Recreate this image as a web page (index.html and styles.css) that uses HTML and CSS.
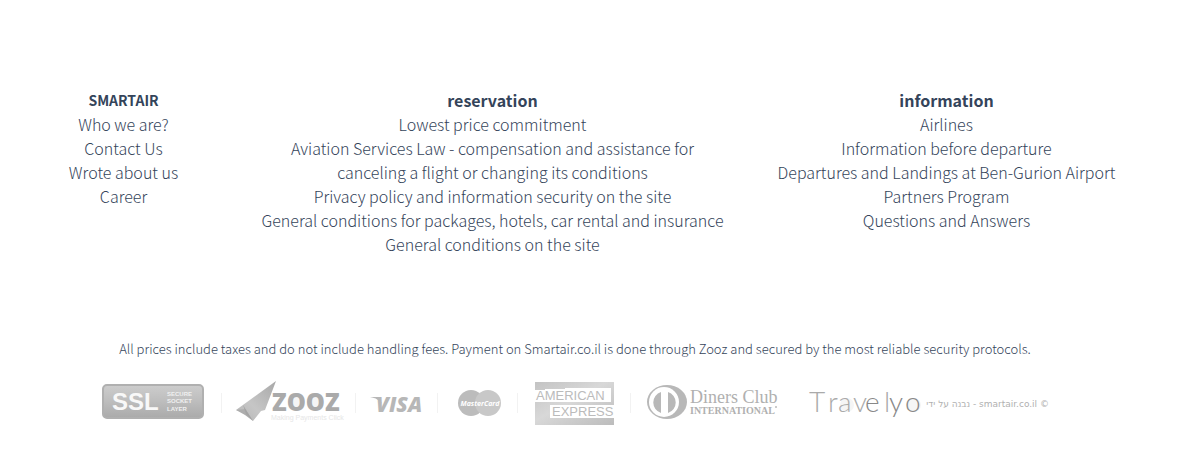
FILE: index.html
```html
<!DOCTYPE html>
<html lang="en">
<head>
<meta charset="utf-8">
<meta name="viewport" content="width=device-width, initial-scale=1">
<title>Smartair</title>
<link rel="stylesheet" href="styles.css">
</head>
<body>
<footer class="footer">
  <nav class="columns" aria-label="Footer">
    <section class="column">
      <h2 class="title title-small">SMARTAIR</h2>
      <ul class="links">
        <li><a href="#">Who we are?</a></li>
        <li><a href="#">Contact Us</a></li>
        <li><a href="#">Wrote about us</a></li>
        <li><a href="#">Career</a></li>
      </ul>
    </section>
    <section class="column">
      <h2 class="title">reservation</h2>
      <ul class="links">
        <li><a href="#">Lowest price commitment</a></li>
        <li><a href="#">Aviation Services Law - compensation and assistance for canceling a flight or changing its conditions</a></li>
        <li><a href="#">Privacy policy and information security on the site</a></li>
        <li><a href="#">General conditions for packages, hotels, car rental and insurance</a></li>
        <li><a href="#">General conditions on the site</a></li>
      </ul>
    </section>
    <section class="column">
      <h2 class="title">information</h2>
      <ul class="links">
        <li><a href="#">Airlines</a></li>
        <li><a href="#">Information before departure</a></li>
        <li><a href="#">Departures and Landings at Ben-Gurion Airport</a></li>
        <li><a href="#">Partners Program</a></li>
        <li><a href="#">Questions and Answers</a></li>
      </ul>
    </section>
  </nav>
  <p class="note">All prices include taxes and do not include handling fees. Payment on Smartair.co.il is done through Zooz and secured by the most reliable security protocols.</p>
  <ul class="logos">
    <li class="logo">
      <svg width="137" height="60" viewBox="0 0 137 60">
        <defs><linearGradient id="ssl" x2="0" y2="1"><stop offset="0" stop-color="#cdcdcd"/><stop offset=".5" stop-color="#bdbdbd"/><stop offset="1" stop-color="#aaa"/></linearGradient></defs>
        <rect x="19" y="15" width="100" height="33" rx="4" fill="url(#ssl)" stroke="#b0b0b0" stroke-width="2"/>
        <text class="ssl-big" x="28" y="40">SSL</text>
        <text class="ssl-small" x="83" y="26">SECURE</text>
        <text class="ssl-small" x="83" y="33">SOCKET</text>
        <text class="ssl-small" x="83" y="41">LAYER</text>
      </svg>
    </li>
    <li class="logo">
      <svg width="133" height="60" viewBox="0 0 133 60">
        <defs><linearGradient id="plane" x1="1" x2="0" y2="1"><stop offset="0" stop-color="#a8a8a8"/><stop offset=".6" stop-color="#c6c6c6"/><stop offset="1" stop-color="#b4b4b4"/></linearGradient></defs>
        <path d="M54 11 14 40l9 3 8 8 8-10 4-1z" fill="url(#plane)"/>
        <path d="M14 40l9-1 8 12-8-6z" fill="#adadad"/>
        <path d="M21 35l3 9 7 7z" fill="#a3a3a3"/>
        <circle cx="75" cy="32" r="8" fill="#f5f5f5"/><circle cx="93" cy="32" r="8" fill="#f5f5f5"/>
        <text class="zooz" x="50" y="41">ZOOZ</text>
        <text class="zooz-tag" x="49" y="50">Making Payments Click</text>
      </svg>
    </li>
    <li class="logo">
      <svg width="81" height="60" viewBox="0 0 81 60">
        <text class="visa" x="20" y="42">VISA</text>
        <path d="M14 27h9l3 7c-3-4-6-6-12-7z" fill="#b7b7b7"/>
      </svg>
    </li>
    <li class="logo">
      <svg width="79" height="60" viewBox="0 0 79 60">
        <circle cx="33" cy="33" r="13" fill="#bcbcbc"/><circle cx="50" cy="33" r="13" fill="#c8c8c8"/>
        <text class="mastercard" x="42" y="36" text-anchor="middle">MasterCard</text>
      </svg>
    </li>
    <li class="logo">
      <svg width="112" height="60" viewBox="0 0 112 60">
        <defs><linearGradient id="amex" x2="1" y2="1"><stop offset="0" stop-color="#c3c3c3"/><stop offset=".45" stop-color="#d8d8d8"/><stop offset="1" stop-color="#bcbcbc"/></linearGradient></defs>
        <path d="M17 12h79v43H17z" fill="url(#amex)"/>
        <path d="M17 20h10v-1h20v-1h46v14H17zM32 35h64v13H32z" fill="#fff"/>
        <text class="amex" x="18" y="30">AMERICAN</text>
        <text class="amex" x="34" y="46">EXPRESS</text>
      </svg>
    </li>
    <li class="logo">
      <svg width="162" height="60" viewBox="0 0 162 60">
        <ellipse cx="36" cy="32" rx="20" ry="17" fill="#b8b8b8"/>
        <circle cx="33" cy="32" r="15" fill="#fff"/>
        <path d="M30 22v21a11 11 0 0 1 0-21zM37 22a11 11 0 0 1 0 21z" fill="#b8b8b8"/>
        <text class="diners" x="59" y="33">Diners Club</text>
        <text class="diners-sub" x="59" y="44">INTERNATIONAL</text>
        <circle cx="145" cy="37" r="1" fill="#bbb"/>
      </svg>
    </li>
    <li class="logo">
      <svg width="273" height="60" viewBox="0 0 273 60">
        <circle cx="53" cy="35" r="7" fill="#f5f5f5"/>
        <circle cx="120" cy="35" r="7" fill="#f5f5f5"/>
        <text class="travelyo" x="15 34 44 59 71 90 95 111" y="42">Trav<tspan class="dark">e</tspan>l<tspan class="dark">yo</tspan></text>
        <text class="credit" x="255" y="37" direction="rtl">© smartair.co.il - נבנה על ידי</text>
      </svg>
    </li>
  </ul>
</footer>
</body>
</html>
```
FILE: styles.css
```css
body {
  margin: 0;
  background: #fff;
  color: #34445a;
  font-family: "Noto Sans CJK SC", "Noto Sans", sans-serif;
}

.footer {
  padding: 88px 38px 40px 0;
  text-align: center;
}

.columns {
  display: grid;
  grid-template-columns: 207fr 531fr 377fr;
  padding: 0 15px 0 20px;
  font-size: 16px;
  line-height: 24px;
}

.column {
  padding: 0 15px;
}

.title {
  margin: 0;
  font-size: 16px;
  font-weight: 700;
  line-height: 24px;
}

.title-small {
  font-size: 14px;
}

.links,
.logos {
  margin: 0;
  padding: 0;
  list-style: none;
}

.links {
  padding: 0 15px;
  font-weight: 300;
}

.links a {
  color: inherit;
  text-decoration: none;
}

.column:last-child .links {
  padding: 0;
}

.note {
  margin: 81px 0 9px;
  font-size: 13px;
  font-weight: 300;
  line-height: 24px;
}

.logos {
  display: flex;
  justify-content: center;
}

.logo {
  display: flex;
  align-items: center;
}

.logo:not(:last-child)::after {
  content: "";
  width: 1px;
  height: 20px;
  margin-top: 6px;
  background: #f2f2f2;
}

.logo:nth-last-child(2)::after {
  background: none;
}

.logo svg {
  display: block;
}

.ssl-big {
  fill: #f8f8f8;
  font: 700 24px "Liberation Sans", sans-serif;
}

.ssl-small {
  fill: #f0f0f0;
  font: 700 6px "Liberation Sans", sans-serif;
}

.zooz {
  fill: #aaa;
  font: 800 24px "Open Sans", sans-serif;
}

.zooz-tag {
  fill: #e6e6e6;
  font: 7px "Liberation Sans", sans-serif;
}

.visa {
  fill: #b7b7b7;
  font: italic 800 21px "Open Sans", sans-serif;
}

.mastercard {
  fill: #fff;
  font: italic 700 7px "Open Sans", sans-serif;
}

.amex {
  fill: #bbb;
  font: 13px "Liberation Sans", sans-serif;
}

.diners {
  fill: #b0b0b0;
  font: 18px "Liberation Serif", serif;
}

.diners-sub {
  fill: #b0b0b0;
  font: 700 10px "Liberation Serif", serif;
}

.travelyo {
  fill: #aaa;
  font: 300 28px Lato, sans-serif;
}

.dark {
  fill: #888;
}

.credit {
  fill: #b0b0b0;
  font: 9px "DejaVu Sans", sans-serif;
}
```
